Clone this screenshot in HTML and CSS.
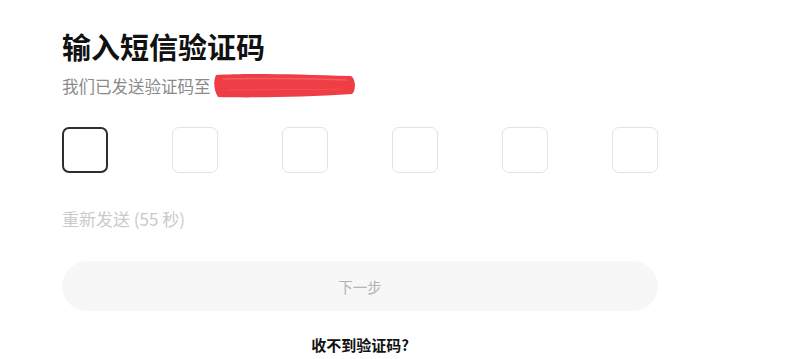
FILE: index.html
```html
<!DOCTYPE html>
<html lang="zh-CN">
<head>
<meta charset="utf-8">
<title>输入短信验证码</title>
<link rel="stylesheet" href="styles.css">
</head>
<body>
<main class="page">
  <h1 class="title">输入短信验证码</h1>
  <div class="subtitle">
    <span>我们已发送验证码至</span>
    <svg class="redact" width="144" height="26" viewBox="0 0 144 26">
      <path d="M3 3 C 30 1, 80 2, 138 4 C 143 7, 143 19, 139 22 C 90 25, 40 26, 5 25 C 1 19, 0 9, 3 3 Z" fill="#ef3d45"/>
      <path d="M10 7 C 50 6, 100 7, 134 8" stroke="#f56a70" stroke-width="1.5" fill="none" opacity="0.7"/>
      <path d="M14 18 C 60 17, 100 18, 130 17" stroke="#f2575e" stroke-width="1.2" fill="none" opacity="0.7"/>
    </svg>
  </div>
  <div class="codes">
    <div class="cell active"></div>
    <div class="cell"></div>
    <div class="cell"></div>
    <div class="cell"></div>
    <div class="cell"></div>
    <div class="cell"></div>
  </div>
  <div class="resend">重新发送 (55 秒)</div>
  <button class="next" type="button">下一步</button>
  <div class="help">收不到验证码?</div>
</main>
</body>
</html>
```

FILE: styles.css
```css
html, body {
  margin: 0;
  padding: 0;
  background: #ffffff;
}

body {
  font-family: "Noto Sans CJK SC", "Noto Sans", sans-serif;
  color: #111;
}

.page {
  width: 596px;
  padding: 28px 0 0 62px;
  display: flex;
  flex-direction: column;
}

.title {
  margin: 0;
  font-size: 29px;
  line-height: 36px;
  font-weight: 700;
  color: #111;
}

.subtitle {
  margin-top: 10px;
  height: 24px;
  display: flex;
  align-items: center;
  font-size: 16.5px;
  line-height: 24px;
  color: #8a8a8a;
}

.redact {
  display: block;
  margin-left: 2px;
  margin-top: -2px;
}

.codes {
  margin-top: 29px;
  display: flex;
  justify-content: space-between;
}

.cell {
  width: 46px;
  height: 46px;
  box-sizing: border-box;
  border: 1.5px solid #e3e3e3;
  border-radius: 7px;
}

.cell.active {
  border: 2px solid #2e2e2e;
}

.resend {
  margin-top: 35px;
  font-size: 17px;
  line-height: 22px;
  color: #cacaca;
}

.next {
  margin-top: 31px;
  height: 50px;
  width: 100%;
  border: none;
  border-radius: 25px;
  background: #f7f7f7;
  color: #b3b3b3;
  font-family: inherit;
  font-size: 14.5px;
  padding: 0;
}

.help {
  margin-top: 24px;
  text-align: center;
  font-size: 15px;
  line-height: 20px;
  font-weight: 700;
  color: #111;
}
```
